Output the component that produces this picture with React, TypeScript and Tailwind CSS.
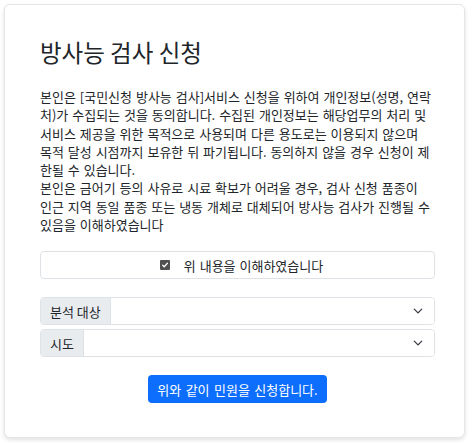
import React from "react";

const lines1 = [
  "본인은 [국민신청 방사능 검사]서비스 신청을 위하여 개인정보(성명, 연락",
  "처)가 수집되는 것을 동의합니다. 수집된 개인정보는 해당업무의 처리 및",
  "서비스 제공을 위한 목적으로 사용되며 다른 용도로는 이용되지 않으며",
  "목적 달성 시점까지 보유한 뒤 파기됩니다. 동의하지 않을 경우 신청이 제",
  "한될 수 있습니다.",
  "본인은 금어기 등의 사유로 시료 확보가 어려울 경우, 검사 신청 품종이",
  "인근 지역 동일 품종 또는 냉동 개체로 대체되어 방사능 검사가 진행될 수",
  "있음을 이해하였습니다",
];

function Chevron() {
  return (
    <svg width="10" height="10" viewBox="0 0 16 16" fill="none">
      <path d="M2 5l6 6 6-6" stroke="#343a40" strokeWidth="2" strokeLinecap="round" strokeLinejoin="round" />
    </svg>
  );
}

function SelectRow({ label }: { label: string }) {
  return (
    <div className="flex h-[28px] w-full rounded-[4px] border border-[#dee2e6] overflow-hidden">
      <div className="flex items-center bg-[#e9ecef] px-[9px] border-r border-[#dee2e6] text-[13px] text-[#212529]">
        {label}
      </div>
      <div className="flex flex-1 items-center justify-end bg-white pr-[11px]">
        <Chevron />
      </div>
    </div>
  );
}

export default function App() {
  return (
    <div
      className="min-h-[445px] w-[474px] bg-white pl-[4px] pt-[4px]"
      style={{ fontFamily: '"Noto Sans CJK KR", "Noto Sans", sans-serif' }}
    >
      <div className="w-[461px] h-[434px] rounded-[6px] border border-[#e6e6e6] bg-white shadow-[0_2px_4px_rgba(0,0,0,0.12)] pl-[35px] pr-[29px] pt-[33px]">
        <h1 className="text-[23.5px] leading-[28px] text-[#212529] font-normal">방사능 검사 신청</h1>
        <div className="mt-[22px] text-[13px] leading-[18.3px] text-[#212529] [word-spacing:1px]">
          {lines1.map((l, i) => (
            <div key={i} className="whitespace-nowrap">
              {l}
            </div>
          ))}
        </div>
        <div className="mt-[17px] flex h-[28px] items-center justify-center rounded-[4px] border border-[#dee2e6] bg-white pl-[8px]">
          <span className="mr-[14px] flex h-[10px] w-[10px] items-center justify-center rounded-[1px] bg-[#505050]">
            <svg width="8" height="8" viewBox="0 0 10 10" fill="none">
              <path d="M2 5.2l2 2 4-4.4" stroke="white" strokeWidth="1.6" strokeLinecap="round" strokeLinejoin="round" />
            </svg>
          </span>
          <span className="text-[13px] text-[#212529] [word-spacing:1px]">위 내용을 이해하였습니다</span>
        </div>
        <div className="mt-[18px] flex flex-col gap-[4px]">
          <SelectRow label="분석 대상" />
          <SelectRow label="시도" />
        </div>
        <div className="mt-[18px] flex justify-center">
          <button className="h-[28px] w-[179px] rounded-[4px] bg-[#0d6efd] text-[13px] text-white [word-spacing:1.5px]">
            위와 같이 민원을 신청합니다.
          </button>
        </div>
      </div>
    </div>
  );
}
